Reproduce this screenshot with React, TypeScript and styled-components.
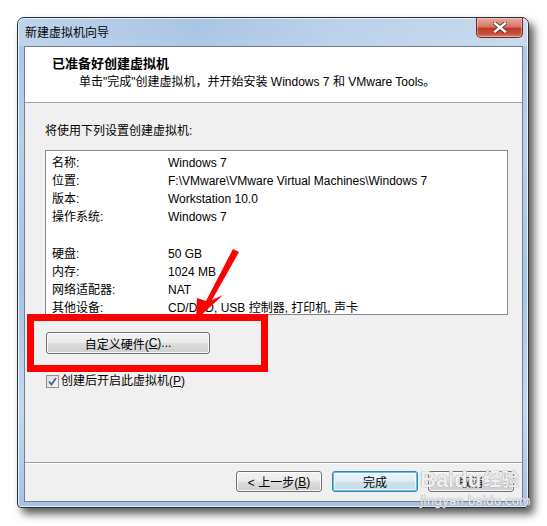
import React from "react";
import styled, { createGlobalStyle } from "styled-components";

const Global = createGlobalStyle`
  html, body { margin: 0; padding: 0; background: #ffffff; }
  body { font-family: "Liberation Sans", "Noto Sans CJK SC", sans-serif; font-size: 12px; color: #000; }
`;

const Page = styled.div`
  width: 547px;
  height: 526px;
  padding: 17px 0 0 17px;
  box-sizing: border-box;
  position: relative;
  overflow: hidden;
`;

const Window = styled.div`
  width: 512px;
  height: 491px;
  box-sizing: border-box;
  border: 1px solid #2a2f36;
  border-radius: 7px 7px 4px 4px;
  background: linear-gradient(180deg, #a9c4e4 0%, #b8d0ea 25%, #a7c3e6 55%, #c4d9ef 80%, #a6c2e4 100%);
  box-shadow: 5px 6px 9px rgba(0, 0, 0, 0.65), inset 0 0 0 1px rgba(255,255,255,0.7);
  display: flex;
  flex-direction: column;
`;

const TitleBar = styled.div`
  height: 28px;
  display: flex;
  align-items: flex-start;
  justify-content: space-between;
  padding-left: 7px;
  background: linear-gradient(90deg, rgba(255,255,255,0.25) 0%, rgba(255,255,255,0) 35%, rgba(255,255,255,0.2) 60%, rgba(255,255,255,0.35) 100%);
  border-radius: 6px 6px 0 0;
`;

const TitleText = styled.span`
  margin-top: 7px;
  font-size: 12px;
  line-height: 16px;
  color: #000;
`;

const CloseButton = styled.div`
  width: 45px;
  height: 19px;
  margin-right: 5px;
  border: 1px solid #6e2a22;
  border-top: none;
  border-radius: 0 0 5px 5px;
  background: linear-gradient(180deg, #e9a99c 0%, #d8796a 45%, #c33a28 55%, #c9503b 85%, #e08a70 100%);
  display: flex;
  align-items: center;
  justify-content: center;
  box-shadow: inset 0 0 0 1px rgba(255,255,255,0.35);
`;

const Client = styled.div`
  flex: 1;
  margin: 0 5px 5px 6px;
  border: 1px solid #6f7f93;
  background: #f0f0f0;
  display: flex;
  flex-direction: column;
  position: relative;
`;

const Header = styled.div`
  height: 56px;
  background: #ffffff;
  border-bottom: 1px solid #a0a0a0;
  display: flex;
  flex-direction: column;
  padding: 9px 0 0 27px;
  box-sizing: border-box;
`;

const HeaderTitle = styled.div`
  font-weight: bold;
  font-size: 13px;
  line-height: 16px;
`;

const HeaderSub = styled.div`
  margin: 2px 0 0 27px;
  line-height: 16px;
`;

const Body = styled.div`
  flex: 1;
  display: flex;
  flex-direction: column;
  padding: 20px 12px 0 20px;
`;

const Caption = styled.div`
  line-height: 16px;
`;

const ListBox = styled.div`
  margin: 11px 0 0 0;
  width: 463px;
  height: 165px;
  box-sizing: border-box;
  border: 1px solid #828790;
  background: #ffffff;
  padding: 3px 0 0 6px;
  display: flex;
  flex-direction: column;
`;

const Row = styled.div<{ $gap?: boolean }>`
  display: grid;
  grid-template-columns: 116px 1fr;
  line-height: 18px;
  height: 18px;
  margin-top: ${(p) => (p.$gap ? "19px" : "0")};
  white-space: nowrap;
`;

const Button = styled.button<{ $default?: boolean; $width: number }>`
  width: ${(p) => p.$width}px;
  height: 21px;
  box-sizing: border-box;
  padding: 0;
  font-family: "Liberation Sans", "Noto Sans CJK SC", sans-serif;
  font-size: 12px;
  color: #000;
  border-radius: 3px;
  border: 1px solid ${(p) => (p.$default ? "#3c7fb1" : "#707070")};
  background: ${(p) =>
    p.$default
      ? "linear-gradient(180deg, #eaf4fb 0%, #e3eef7 48%, #cfe0ed 52%, #c7dbea 100%)"
      : "linear-gradient(180deg, #f2f2f2 0%, #ebebeb 48%, #dddddd 52%, #cfcfcf 100%)"};
  box-shadow: ${(p) =>
    p.$default ? "inset 0 0 0 1px #5ec2f0, inset 0 0 0 2px rgba(255,255,255,0.6)" : "inset 0 0 0 1px rgba(255,255,255,0.8)"};
  display: flex;
  align-items: center;
  justify-content: center;
`;

const HardwareButton = styled(Button)`
  height: 22px;
  margin: 17px 0 0 1px;
`;

const CheckRow = styled.label`
  display: flex;
  align-items: center;
  gap: 2px;
  margin-top: 19px;
  margin-left: 1px;
  line-height: 16px;
`;

const CheckBox = styled.span`
  width: 11px;
  height: 11px;
  border: 1px solid #8e8f8f;
  background: linear-gradient(135deg, #dcdcdc 0%, #f7f7f7 100%);
  display: flex;
  align-items: center;
  justify-content: center;
`;

const Footer = styled.div`
  height: 39px;
  border-top: 1px solid #a0a0a0;
  box-shadow: inset 0 1px 0 #ffffff;
  display: flex;
  justify-content: flex-end;
  align-items: flex-start;
  gap: 10px;
  padding: 8px 8px 0 0;
  box-sizing: border-box;
`;

const U = styled.span`
  text-decoration: underline;
`;

const RedFrame = styled.div`
  position: absolute;
  left: 27px;
  top: 314px;
  width: 241px;
  height: 58px;
  box-sizing: border-box;
  border: 7px solid #ff0000;
  pointer-events: none;
`;

const ArrowSvg = styled.svg`
  position: absolute;
  left: 0;
  top: 0;
  pointer-events: none;
`;

const Watermark = styled.div`
  position: absolute;
  left: 420px;
  top: 468px;
  display: flex;
  flex-direction: column;
  align-items: flex-start;
  pointer-events: none;
  color: rgba(255, 255, 255, 0.85);
  text-shadow: 0 0 1px #9a9a9a, 0 0 1px #9a9a9a;
`;

const WmBig = styled.div`
  font-family: "Liberation Sans", "Noto Sans CJK SC", sans-serif;
  font-size: 22px;
  font-weight: bold;
  line-height: 24px;
  display: flex;
  align-items: center;
`;

const WmCn = styled.span`
  font-size: 18px;
  margin-left: 2px;
`;

const WmSmall = styled.div`
  font-family: "DejaVu Sans", sans-serif;
  font-size: 12px;
  line-height: 14px;
  margin-top: 2px;
`;

const rows: { k: string; v: string; gap?: boolean }[] = [
  { k: "名称:", v: "Windows 7" },
  { k: "位置:", v: "F:\\VMware\\VMware Virtual Machines\\Windows 7" },
  { k: "版本:", v: "Workstation 10.0" },
  { k: "操作系统:", v: "Windows 7" },
  { k: "硬盘:", v: "50 GB", gap: true },
  { k: "内存:", v: "1024 MB" },
  { k: "网络适配器:", v: "NAT" },
  { k: "其他设备:", v: "CD/DVD, USB 控制器, 打印机, 声卡" },
];

export default function App() {
  return (
    <Page>
      <Global />
      <Window>
        <TitleBar>
          <TitleText>新建虚拟机向导</TitleText>
          <CloseButton>
            <svg width="14" height="11" viewBox="0 0 14 11">
              <path d="M2 1.5 L12 9.5 M12 1.5 L2 9.5" stroke="#4a2a26" strokeWidth="4" strokeLinecap="square" />
              <path d="M2 1.5 L12 9.5 M12 1.5 L2 9.5" stroke="#ffffff" strokeWidth="2.4" strokeLinecap="square" />
            </svg>
          </CloseButton>
        </TitleBar>
        <Client>
          <Header>
            <HeaderTitle>已准备好创建虚拟机</HeaderTitle>
            <HeaderSub>单击"完成"创建虚拟机，并开始安装 Windows 7 和 VMware Tools。</HeaderSub>
          </Header>
          <Body>
            <Caption>将使用下列设置创建虚拟机:</Caption>
            <ListBox>
              {rows.map((r) => (
                <Row key={r.k} $gap={r.gap}>
                  <span>{r.k}</span>
                  <span>{r.v}</span>
                </Row>
              ))}
            </ListBox>
            <HardwareButton $width={164}>
              自定义硬件(<U>C</U>)...
            </HardwareButton>
            <CheckRow>
              <CheckBox>
                <svg width="9" height="9" viewBox="0 0 9 9">
                  <path d="M1 4.5 L3.5 7.5 L8 1" stroke="#4a5f97" strokeWidth="1.8" fill="none" />
                </svg>
              </CheckBox>
              <span>
                创建后开启此虚拟机(<U>P</U>)
              </span>
            </CheckRow>
          </Body>
          <Footer>
            <Button $width={86}>
              &lt; 上一步(<U>B</U>)
            </Button>
            <Button $width={86} $default>
              完成
            </Button>
            <Button $width={86}>取消</Button>
          </Footer>
        </Client>
      </Window>
      <RedFrame />
      <ArrowSvg width="547" height="526" viewBox="0 0 547 526">
        <polygon points="233,249 239,252 212,300 223,295 196,320 197,298 206,301" fill="#ff0000" />
      </ArrowSvg>
      <Watermark>
        <WmBig>
          Baidu<WmCn>经验</WmCn>
        </WmBig>
        <WmSmall>jingyan.baidu.com</WmSmall>
      </Watermark>
    </Page>
  );
}
